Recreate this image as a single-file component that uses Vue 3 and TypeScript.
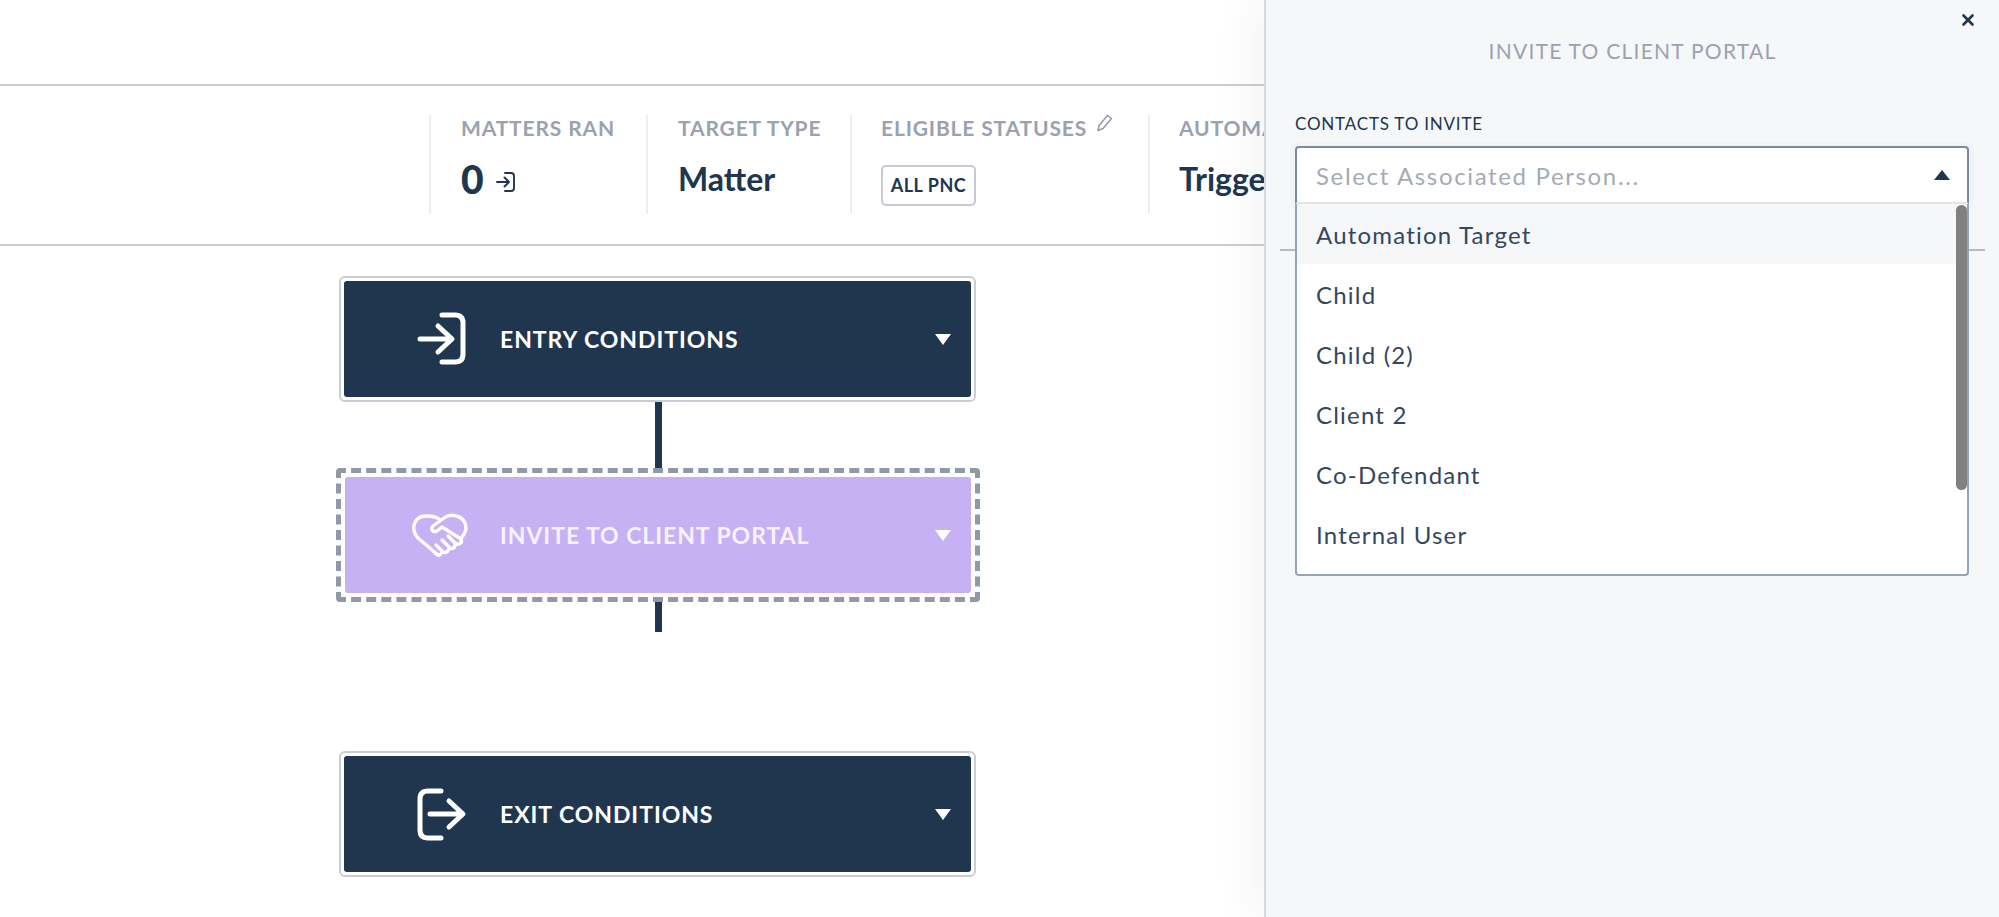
<script setup lang="ts">
const stats = [
  { label: 'MATTERS RAN', value: '0', kind: 'count' },
  { label: 'TARGET TYPE', value: 'Matter', kind: 'text' },
  { label: 'ELIGIBLE STATUSES', value: 'ALL PNC', kind: 'badge' },
  { label: 'AUTOMATION TYPE', value: 'Trigger', kind: 'text' },
]
const options = ['Automation Target', 'Child', 'Child (2)', 'Client 2', 'Co-Defendant', 'Internal User']
</script>

<template>
  <div class="page">
    <div class="topbar"></div>
    <div class="stats">
      <div v-for="s in stats" :key="s.label" class="stat" :class="'stat-' + s.kind">
        <div class="stat-label">
          {{ s.label }}
          <svg v-if="s.kind === 'badge'" class="pencil" width="20" height="20" viewBox="0 0 20 20" fill="none" stroke="#8f97a5" stroke-width="1.4" stroke-linejoin="round">
            <path d="M5 12.500 13.500 2.500 17.500 5.500 9 15.500 4 17.500Z" />
          </svg>
        </div>
        <div class="stat-value">
          <span v-if="s.kind === 'badge'" class="badge">{{ s.value }}</span>
          <template v-else>
            <span>{{ s.value }}</span>
            <svg v-if="s.kind === 'count'" class="mini-entry" width="22" height="22" viewBox="0 0 22 22" fill="none" stroke="#20364f" stroke-width="1.9" stroke-linecap="round" stroke-linejoin="round">
              <path d="M10 2h6q3 0 3 3v12q0 3-3 3h-6" />
              <path d="M2 11h12M9.500 6.500 14 11l-4.500 4.500" />
            </svg>
          </template>
        </div>
      </div>
    </div>

    <div class="flow">
      <div class="node">
        <div class="fill">
          <svg class="icon" width="60" height="60" viewBox="0 0 60 60" fill="none" stroke="#fff" stroke-width="5" stroke-linecap="round" stroke-linejoin="round">
            <path d="M31 6h13q8 0 8 8v31q0 8-8 8H31" />
            <path d="M9 30h31M27 17l14 13-14 13" />
          </svg>
          <span class="node-title">ENTRY CONDITIONS</span>
          <span class="caret"></span>
        </div>
      </div>
      <div class="link link-top"></div>
      <div class="node selected">
        <div class="fill purple">
          <svg class="icon" width="60" height="60" viewBox="0 0 60 60" fill="none" stroke="#fff" stroke-width="3.400" stroke-linecap="round" stroke-linejoin="round">
            <path d="M27 50 7 33C-1 24 3 11 15 11c5 0 9 0 13 3" />
            <path d="M33 13c4-3 9-3 12-2 10 2 13 13 6 21l-1 2" />
            <path d="M33 13 22 21c-3 3 0 7 4 5l5-4 19 12c2 4-3 7-6 4" />
            <path d="M44 38c1 5-3 7-6 4l-7-7M37 31l7 7M38 42c0 5-4 7-7 4l-6-6M31 46c-1 5-4 5-7 2" />
          </svg>
          <span class="node-title">INVITE TO CLIENT PORTAL</span>
          <span class="caret"></span>
        </div>
      </div>
      <div class="link link-bottom"></div>
      <div class="node exit">
        <div class="fill">
          <svg class="icon" width="60" height="60" viewBox="0 0 60 60" fill="none" stroke="#fff" stroke-width="5" stroke-linecap="round" stroke-linejoin="round">
            <path d="M30 7H17q-8 0-8 8v31q0 8 8 8h13" />
            <path d="M19 30h32M38 17l14 13-14 13" />
          </svg>
          <span class="node-title">EXIT CONDITIONS</span>
          <span class="caret"></span>
        </div>
      </div>
    </div>

    <aside class="panel">
      <svg class="close" width="14" height="14" viewBox="0 0 14 14" fill="none" stroke="#20364f" stroke-width="2.600" stroke-linecap="round">
        <path d="M2.500 2.500l9 9M11.500 2.500l-9 9" />
      </svg>
      <h2 class="panel-title">INVITE TO CLIENT PORTAL</h2>
      <div class="panel-rule"></div>
      <div class="field">
        <label class="field-label">CONTACTS TO INVITE</label>
        <div class="select">
          <span class="placeholder">Select Associated Person...</span>
          <span class="caret-up"></span>
        </div>
        <div class="menu">
          <div v-for="(o, i) in options" :key="o" class="option" :class="{ active: i === 0 }">{{ o }}</div>
          <div class="scrollbar"></div>
        </div>
      </div>
    </aside>
  </div>
</template>

<style>
html, body { margin: 0; padding: 0; background: #fff; overflow: hidden; }
</style>

<style scoped>
.page {
  position: relative;
  width: 1999px;
  height: 917px;
  overflow: hidden;
  background: #fff;
  color: #20364f;
  font-family: Lato, "Open Sans", sans-serif;
}
.topbar {
  height: 84px;
  border-bottom: 2px solid #c8ccd6;
}
.stats {
  box-sizing: border-box;
  height: 160px;
  padding: 29px 0 30px 429px;
  display: flex;
  border-bottom: 2px solid #c8ccd6;
}
.stat {
  box-sizing: border-box;
  border-left: 2px solid #eceef1;
  padding-left: 30px;
  flex: none;
  white-space: nowrap;
}
.stat:nth-child(1) { width: 217px; }
.stat:nth-child(2) { width: 204px; }
.stat:nth-child(3) { width: 298px; padding-left: 29px; }
.stat:nth-child(4) { width: 118px; padding-left: 29px; overflow: hidden; }
.stat-label {
  font-size: 21px;
  font-weight: 700;
  letter-spacing: 0.85px;
  line-height: 26px;
  height: 26px;
  color: #9aa2b0;
  display: flex;
  align-items: flex-start;
  gap: 7px;
}
.pencil { margin-top: -2px; flex: none; }
.stat-value {
  margin-top: 13px;
  height: 50px;
  display: flex;
  align-items: center;
  font-size: 32px;
  font-weight: 700;
  line-height: 50px;
}
.stat-count .stat-value { font-size: 39px; font-weight: 900; }
.mini-entry { margin-left: 11px; margin-top: 5px; }
.badge {
  box-sizing: border-box;
  display: block;
  margin-top: 13px;
  height: 41px;
  width: 95px;
  border: 2px solid #c5c9d2;
  border-radius: 5px;
  text-align: center;
  font-size: 18px;
  font-weight: 700;
  line-height: 37px;
  letter-spacing: 0.5px;
}
.flow {
  width: 644px;
  margin-left: 336px;
  padding-top: 30px;
  display: flex;
  flex-direction: column;
  align-items: center;
}
.node {
  box-sizing: border-box;
  width: 637px;
  height: 126px;
  margin-right: 1px;
  padding: 3px;
  border: 2px solid #c9cdd6;
  border-radius: 6px;
  background: #fff;
}
.selected {
  width: 644px;
  height: 134px;
  margin-right: 0;
  padding: 4px;
  border: 5px dashed #9099a6;
  border-radius: 4px;
  position: relative;
}
.fill {
  height: 100%;
  display: flex;
  align-items: center;
  background: #20364f;
  border-radius: 3px;
  padding-right: 20px;
}
.purple { background: #c6b1f5; }
.icon { margin-left: 67px; margin-right: 29px; flex: none; }
.selected .icon { margin-left: 66px; }
.node-title {
  flex: 1;
  color: #fff;
  font-size: 23px;
  font-weight: 700;
  letter-spacing: 0.95px;
}
.purple .node-title { color: #f6f2ff; }
.caret {
  width: 0;
  height: 0;
  border-left: 8.5px solid transparent;
  border-right: 8.5px solid transparent;
  border-top: 11px solid #fff;
}
.link {
  width: 7px;
  background: #20364f;
  flex: none;
}
.link-top { height: 66px; }
.link-bottom { height: 30px; }
.exit { margin-top: 119px; }
.panel {
  position: absolute;
  top: 0;
  right: 0;
  bottom: 0;
  width: 735px;
  box-sizing: border-box;
  background: #f6f7f9;
  border-left: 2px solid #d5d9e0;
  box-shadow: -12px 0 40px rgba(32, 54, 79, 0.05);
}
.close {
  position: absolute;
  top: 13px;
  right: 24px;
}
.panel-title {
  margin: 0;
  padding-top: 37px;
  text-align: center;
  font-size: 21px;
  line-height: 28px;
  font-weight: 400;
  letter-spacing: 1.25px;
  color: #9aa2b0;
}
.panel-rule {
  position: absolute;
  left: 14px;
  right: 14px;
  top: 249px;
  height: 2px;
  background: #b4bac4;
}
.field {
  position: relative;
  margin: 0 30px 0 29px;
  padding-top: 47px;
}
.field-label {
  display: block;
  font-size: 17px;
  line-height: 24px;
  letter-spacing: 0.8px;
}
.select {
  box-sizing: border-box;
  margin-top: 10px;
  height: 58px;
  padding: 0 17px 0 19px;
  display: flex;
  align-items: center;
  justify-content: space-between;
  background: #fff;
  border: 2px solid #7f8b9c;
  border-bottom: 2px solid #e3e5ea;
  border-radius: 4px 4px 0 0;
  box-shadow: 0 0 0 5px rgba(32, 54, 79, 0.02);
}
.placeholder { font-size: 24px; color: #a5abb5; letter-spacing: 1.65px; }
.caret-up {
  width: 0;
  height: 0;
  border-left: 8.5px solid transparent;
  border-right: 8.5px solid transparent;
  border-bottom: 10px solid #20364f;
}
.menu {
  position: relative;
  box-sizing: border-box;
  height: 372px;
  background: #fff;
  border: 2px solid #98a3b3;
  border-top: 0;
  border-radius: 0 0 4px 4px;
  overflow: hidden;
}
.option {
  height: 60px;
  line-height: 61px;
  padding-left: 19px;
  font-size: 24px;
  letter-spacing: 1.2px;
  color: #33475f;
}
.active { background: #f6f7f9; }
.scrollbar {
  position: absolute;
  top: 1px;
  right: 0;
  width: 11px;
  height: 285px;
  border-radius: 6px;
  background: #808080;
}
</style>
